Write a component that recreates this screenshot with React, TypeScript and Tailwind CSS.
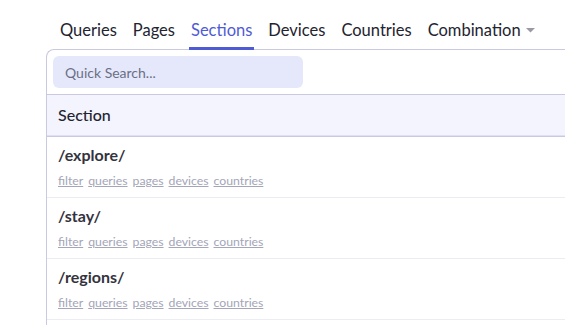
import React from "react";

const tabs = ["Queries", "Pages", "Sections", "Devices", "Countries"];
const rows = ["/explore/", "/stay/", "/regions/"];
const links = ["filter", "queries", "pages", "devices", "countries"];

export default function App() {
  return (
    <div
      className="w-[565px] h-[325px] overflow-hidden bg-white text-[#23232f]"
      style={{ fontFamily: "Lato, 'Noto Sans', sans-serif" }}
    >
      <div className="pl-[58px] pt-[18px] flex items-end h-[50px] gap-[12px] relative z-10">
        {tabs.map((t) => (
          <div
            key={t}
            className={
              "px-[2px] h-[32px] pt-[1px] flex items-start text-[16.5px] leading-[22px] border-b-[3px] " +
              (t === "Sections" ? "text-[#4f5bd5] border-[#4f5bd5]" : "border-transparent")
            }
          >
            {t}
          </div>
        ))}
        <div className="px-[2px] h-[32px] pt-[1px] flex items-start text-[16.5px] leading-[22px] border-b-[3px] border-transparent">
          Combination
          <svg width="9" height="5" viewBox="0 0 9 5" className="ml-[5px] mt-[9px]">
            <path d="M0 0 L9 0 L4.5 4.5 Z" fill="#9a9aa6" />
          </svg>
        </div>
      </div>
      <div className="ml-[46px] -mt-[1px] border-l border-t border-[#c9c9e0] rounded-tl-[8px] h-[400px]">
        <div className="px-[6px] pt-[6px] pb-[6px]">
          <div className="w-[250px] h-[32px] rounded-[6px] bg-[#e5e8fb] flex items-center px-[12px] text-[14px] text-[#6b6f85]">
            Quick Search...
          </div>
        </div>
        <div className="h-[43px] bg-[#f3f4fe] border-t border-b border-t-[#c9c9e0] border-b-[#c9c9e0] flex flex-col">
          <div className="flex-1 flex items-center px-[11px] text-[16px] font-medium">Section</div>
          <div className="h-[1px] bg-[#dde0f6]" />
        </div>
        {rows.map((r) => (
          <div key={r} className="h-[61px] border-b border-[#ececf3] px-[11px] pt-[7px]">
            <div className="text-[16px] font-bold leading-[22px] text-[#33333d]">{r}</div>
            <div className="mt-[7px] flex gap-[5px] text-[12.25px] leading-[16px] text-[#a3a5b8]">
              {links.map((l) => (
                <span key={l} className="underline">{l}</span>
              ))}
            </div>
          </div>
        ))}
      </div>
    </div>
  );
}
